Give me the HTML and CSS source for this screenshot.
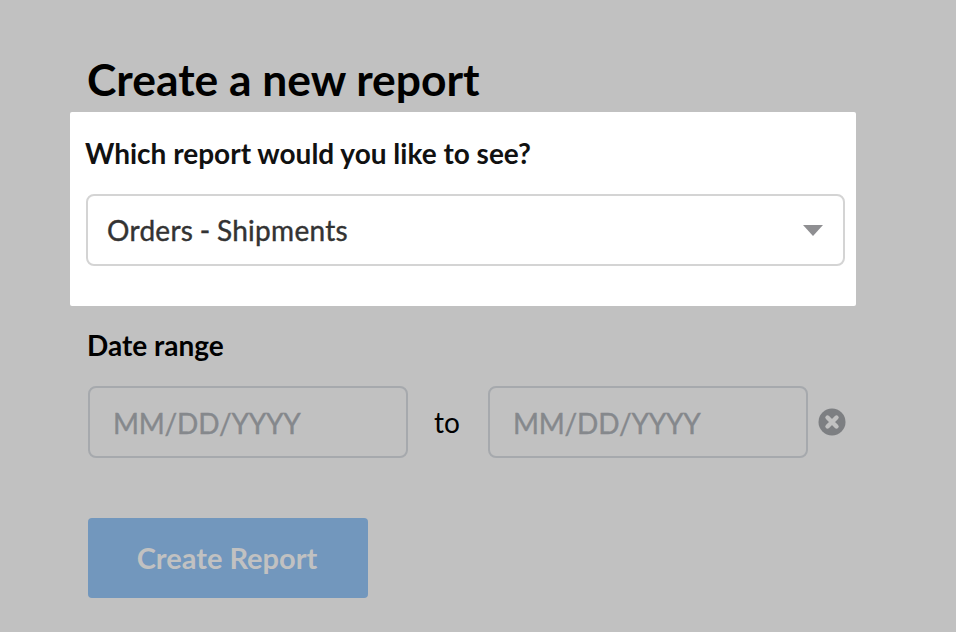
FILE: index.html
```html
<!DOCTYPE html>
<html lang="en">
<head>
    <meta charset="UTF-8">
    <meta name="viewport" content="width=device-width, initial-scale=1.0">
    <title>Create a new report</title>
    <link rel="stylesheet" href="styles.css">
</head>
<body>
    <div class="container">
        <h1>Create a new report</h1>

        <div class="highlight-box">
            <label class="box-label">Which report would you like to see?</label>
            <div class="select-box">
                <span class="select-value">Orders - Shipments</span>
                <span class="arrow"></span>
            </div>
        </div>

        <div class="date-group">
            <label class="date-label">Date range</label>
            <div class="date-row">
                <input type="text" class="date-input" placeholder="MM/DD/YYYY">
                <span class="date-to">to</span>
                <input type="text" class="date-input" placeholder="MM/DD/YYYY">
                <svg class="clear-icon" width="28" height="28" viewBox="0 0 28 28">
                    <circle cx="14" cy="14" r="13.5" fill="#7d7f82"/>
                    <path d="M9.5 9.5 L18.5 18.5 M18.5 9.5 L9.5 18.5" stroke="#c1c1c1" stroke-width="4.4" stroke-linecap="round"/>
                </svg>
            </div>
        </div>

        <button class="create-btn">Create Report</button>
    </div>
</body>
</html>
```

FILE: styles.css
```css
html, body {
    margin: 0;
    padding: 0;
}
body {
    font-family: Lato, "Open Sans", sans-serif;
    background-color: #c1c1c1;
    height: 632px;
    overflow: hidden;
}
.container {
    padding: 55px 0 0 70px;
    width: 786px;
}
h1 {
    margin: 0 0 0 17px;
    height: 57px;
    font-size: 44.4px;
    line-height: 48px;
    font-weight: 700;
    color: #000;
}
.highlight-box {
    background-color: white;
    border-radius: 2px;
    height: 194px;
    box-sizing: border-box;
    padding: 24px 11px 0 16px;
}
.box-label {
    display: block;
    margin-left: -1px;
    font-size: 28px;
    line-height: 34px;
    font-weight: 700;
    color: #111;
}
.select-box {
    margin-top: 24px;
    height: 72px;
    box-sizing: border-box;
    border: 2px solid #d4d4d4;
    border-radius: 8px;
    padding: 0 19px;
    display: flex;
    align-items: center;
    justify-content: space-between;
    font-size: 28px;
    color: #333;
}
.select-value {
    letter-spacing: 0.3px;
    word-spacing: -1px;
    -webkit-text-stroke: 0.4px #333;
}
.arrow {
    width: 0;
    height: 0;
    margin-right: 1px;
    border-left: 10px solid transparent;
    border-right: 10px solid transparent;
    border-top: 11px solid #8f8f92;
}
.date-group {
    margin: 22px 0 0 18px;
}
.date-label {
    display: block;
    margin-left: -1px;
    font-size: 28px;
    line-height: 34px;
    font-weight: 700;
    color: #000;
}
.date-row {
    margin-top: 24px;
    display: flex;
    align-items: center;
}
.date-input {
    width: 320px;
    height: 72px;
    box-sizing: border-box;
    border: 2px solid #a6a9ad;
    border-radius: 8px;
    background: transparent;
    padding: 2px 23px 0;
    font-family: inherit;
    font-size: 28px;
    letter-spacing: -0.2px;
    color: #85888c;
    -webkit-text-stroke: 0.4px #85888c;
}
.date-input::placeholder {
    color: #85888c;
    opacity: 1;
}
.date-to {
    width: 78px;
    margin-right: 2px;
    text-align: center;
    font-size: 28px;
    color: #000;
}
.clear-icon {
    margin-left: 10px;
}
.create-btn {
    display: block;
    margin: 60px 0 0 18px;
    padding: 0 2px 2px 0;
    width: 280px;
    height: 80px;
    background-color: #7297bd;
    color: #c1c1c1;
    border: none;
    border-radius: 4px;
    font-family: inherit;
    font-size: 29px;
    font-weight: 700;
}
```
